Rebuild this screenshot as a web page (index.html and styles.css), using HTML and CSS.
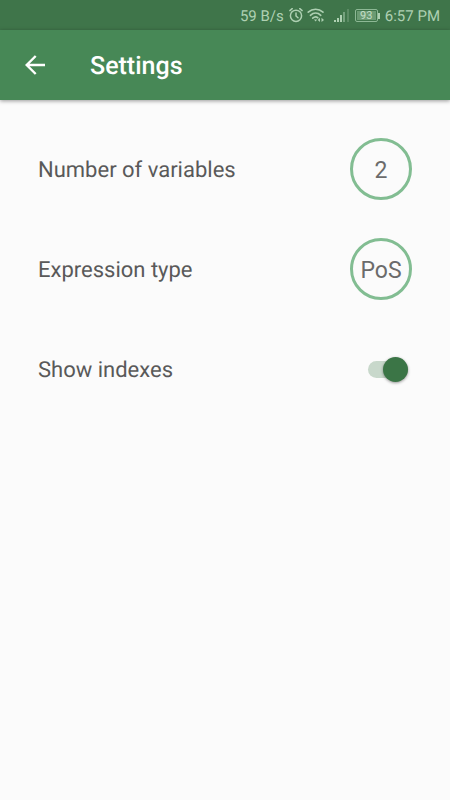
FILE: index.html
```html
<!DOCTYPE html>
<html lang="en">
<head>
<meta charset="utf-8">
<meta name="viewport" content="width=device-width, initial-scale=1">
<title>Settings</title>
<link rel="stylesheet" href="styles.css">
</head>
<body>
<div class="status">
  <span class="rate">59 B/s</span>
  <svg class="alarm" width="14" height="16" viewBox="0 0 14 16" fill="none" stroke="currentColor" stroke-width="1.5" stroke-linecap="round" aria-hidden="true">
    <circle cx="7" cy="7.800" r="5.600"/>
    <path d="M7 5v3l2 1.800M.9 2.600l2.300-2M13.100 2.600l-2.300-2"/>
  </svg>
  <svg class="wifi" width="18" height="16" viewBox="0 0 18 16" fill="none" stroke="currentColor" stroke-width="1.600" stroke-linecap="round" aria-hidden="true">
    <path d="M1.200 4.200c4.400-4 10.400-4 14.800 0M3.400 7.300c3.100-2.900 7.300-2.900 10.400 0M5.700 10.200c1.700-1.600 3.800-1.600 5.200-.4"/>
    <path d="M7 11.600h3.200L8.600 13.600zM13 9.800v4.200l-2.300-2.100zM14.500 9.800v4.200l2.500-2.100z" fill="currentColor" stroke="none"/>
  </svg>
  <svg class="signal" width="15" height="14" viewBox="0 0 15 14" fill="currentColor" aria-hidden="true">
    <path d="M0 11h2v2H0zM3 9h2v4H3zM6 6h2v7H6z"/>
    <path d="M9 3h2v10H9z" opacity=".5"/>
    <path d="M13 0h2v13h-2z" opacity=".25"/>
  </svg>
  <span class="battery"><span class="level">93</span></span>
  <span class="time">6:57 PM</span>
</div>
<header class="bar">
  <button class="back" type="button" aria-label="Back">
    <svg width="20" height="20" viewBox="0 0 20 20" fill="none" stroke="currentColor" stroke-width="2.400" aria-hidden="true">
      <path d="M20 10H2M10.700 1L1.700 10l9 9"/>
    </svg>
  </button>
  <h1 class="title">Settings</h1>
</header>
<main class="settings">
  <div class="row">
    <label for="variables">Number of variables</label>
    <button class="value" id="variables" type="button">2</button>
  </div>
  <div class="row">
    <label for="expression">Expression type</label>
    <button class="value" id="expression" type="button">PoS</button>
  </div>
  <div class="row">
    <label for="indexes">Show indexes</label>
    <input class="switch" id="indexes" type="checkbox" role="switch" checked>
  </div>
</main>
</body>
</html>
```
FILE: styles.css
```css
* {
  box-sizing: border-box;
}

body {
  margin: 0;
  min-height: 100vh;
  background: #fbfbfb;
  color: #595959;
  font-family: Roboto, "Liberation Sans", sans-serif;
  text-rendering: geometricPrecision;
}

.status {
  display: flex;
  align-items: center;
  justify-content: flex-end;
  height: 30px;
  padding: 1px 10px 0;
  background: #3f754a;
  color: #aed0b2;
  font-size: 15px;
  line-height: 20px;
}

.rate {
  margin-right: 5px;
}

.alarm {
  margin-right: 4px;
}

.wifi {
  margin-right: 9px;
}

.signal {
  margin-right: 6px;
}

.battery {
  display: flex;
  align-items: center;
  margin-right: 5px;
}

.battery::after {
  content: "";
  width: 2px;
  height: 6px;
  background: currentColor;
}

.level {
  width: 23px;
  height: 13px;
  padding: 1px;
  border: 1px solid #8db895;
  border-radius: 2px;
  background: #6b9b73 content-box;
  color: #c4dfc7;
  font-size: 11px;
  line-height: 10px;
  text-align: center;
}

.bar {
  display: flex;
  align-items: center;
  height: 70px;
  padding: 0 25px;
  background: #478856;
  color: #fff;
  box-shadow: 0 1px 4px rgba(0, 0, 0, 0.4);
}

.back {
  display: flex;
  width: 65px;
  padding: 0;
  border: 0;
  background: none;
  color: inherit;
}

.title {
  margin: 0;
  padding-top: 3px;
  font-size: 25px;
  font-weight: 500;
  line-height: 32px;
}

.settings {
  padding: 19px 38px;
}

.row {
  display: flex;
  align-items: center;
  justify-content: space-between;
  height: 100px;
  font-size: 22px;
  line-height: 28px;
}

.row label {
  padding-top: 3px;
}

.value {
  width: 62px;
  height: 62px;
  padding: 3px 0 0;
  border: 3px solid #82bd92;
  border-radius: 50%;
  background: none;
  color: #6b6b6b;
  font: inherit;
  font-size: 23px;
}

.switch {
  display: flex;
  align-items: center;
  justify-content: flex-end;
  appearance: none;
  width: 40px;
  height: 17px;
  margin: 0 4px;
  border-radius: 9px;
  background: #c8d8cb;
}

.switch::before {
  content: "";
  flex: none;
  width: 25px;
  height: 25px;
  border-radius: 50%;
  background: #3b7546;
  box-shadow: 0 1px 3px rgba(0, 0, 0, 0.4);
}

.switch:not(:checked) {
  justify-content: flex-start;
}
```
